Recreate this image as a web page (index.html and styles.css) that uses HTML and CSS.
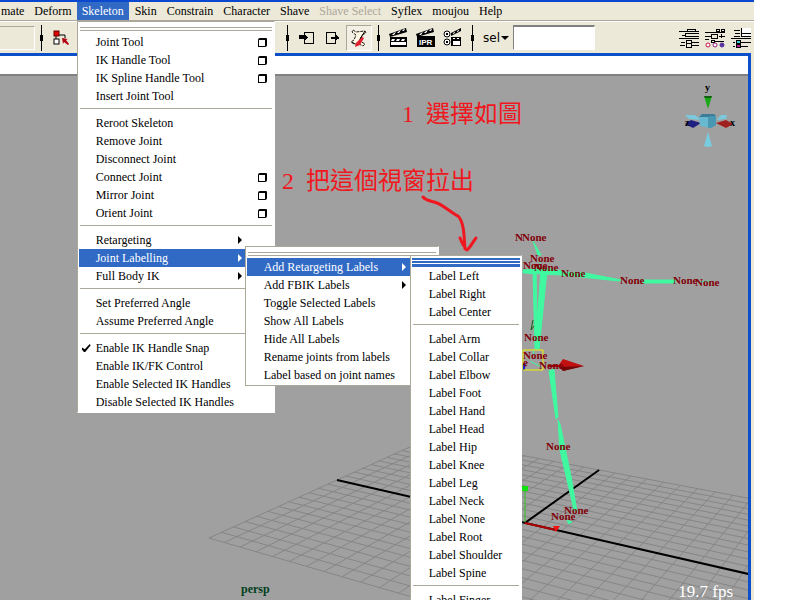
FILE: index.html
```
<!DOCTYPE html>
<html lang="zh-Hant">
<head>
  <meta charset="UTF-8" />
  <title>Skeleton - Joint Labelling</title>
  <link rel="stylesheet" href="styles.css">
</head>
<body>
  <div class="app">
    <nav class="menubar">
      <ul>
        <li><button type="button">mate</button></li>
        <li><button type="button">Deform</button></li>
        <li class="open">
          <button type="button">Skeleton</button>
          <div class="menu menu-skeleton">
            <button type="button" class="tear" aria-label="Tear off"><span></span></button>
            <ul>
              <li><button type="button" class="item"><span>Joint Tool</span><i class="box"></i></button></li>
              <li><button type="button" class="item"><span>IK Handle Tool</span><i class="box"></i></button></li>
              <li><button type="button" class="item"><span>IK Spline Handle Tool</span><i class="box"></i></button></li>
              <li><button type="button" class="item"><span>Insert Joint Tool</span></button></li>
              <li class="line"></li>
              <li><button type="button" class="item"><span>Reroot Skeleton</span></button></li>
              <li><button type="button" class="item"><span>Remove Joint</span></button></li>
              <li><button type="button" class="item"><span>Disconnect Joint</span></button></li>
              <li><button type="button" class="item"><span>Connect Joint</span><i class="box"></i></button></li>
              <li><button type="button" class="item"><span>Mirror Joint</span><i class="box"></i></button></li>
              <li><button type="button" class="item"><span>Orient Joint</span><i class="box"></i></button></li>
              <li class="line"></li>
              <li><button type="button" class="item"><span>Retargeting</span><i class="arrow"></i></button></li>
              <li>
                <button type="button" class="item active"><span>Joint Labelling</span><i class="arrow"></i></button>
                <div class="menu menu-labelling">
                  <button type="button" class="tear" aria-label="Tear off"><span></span></button>
                  <ul>
                    <li>
                      <button type="button" class="item active"><span>Add Retargeting Labels</span><i class="arrow"></i></button>
                      <div class="menu menu-retarget">
                        <button type="button" class="tear tear-active" aria-label="Tear off"><span></span></button>
                        <ul>
                          <li><button type="button" class="item"><span>Label Left</span></button></li>
                          <li><button type="button" class="item"><span>Label Right</span></button></li>
                          <li><button type="button" class="item"><span>Label Center</span></button></li>
                          <li class="line"></li>
                          <li><button type="button" class="item"><span>Label Arm</span></button></li>
                          <li><button type="button" class="item"><span>Label Collar</span></button></li>
                          <li><button type="button" class="item"><span>Label Elbow</span></button></li>
                          <li><button type="button" class="item"><span>Label Foot</span></button></li>
                          <li><button type="button" class="item"><span>Label Hand</span></button></li>
                          <li><button type="button" class="item"><span>Label Head</span></button></li>
                          <li><button type="button" class="item"><span>Label Hip</span></button></li>
                          <li><button type="button" class="item"><span>Label Knee</span></button></li>
                          <li><button type="button" class="item"><span>Label Leg</span></button></li>
                          <li><button type="button" class="item"><span>Label Neck</span></button></li>
                          <li><button type="button" class="item"><span>Label None</span></button></li>
                          <li><button type="button" class="item"><span>Label Root</span></button></li>
                          <li><button type="button" class="item"><span>Label Shoulder</span></button></li>
                          <li><button type="button" class="item"><span>Label Spine</span></button></li>
                          <li class="line"></li>
                          <li><button type="button" class="item"><span>Label Finger</span></button></li>
                        </ul>
                      </div>
                    </li>
                    <li><button type="button" class="item"><span>Add FBIK Labels</span><i class="arrow"></i></button></li>
                    <li><button type="button" class="item"><span>Toggle Selected Labels</span></button></li>
                    <li><button type="button" class="item"><span>Show All Labels</span></button></li>
                    <li><button type="button" class="item"><span>Hide All Labels</span></button></li>
                    <li><button type="button" class="item"><span>Rename joints from labels</span></button></li>
                    <li><button type="button" class="item"><span>Label based on joint names</span></button></li>
                  </ul>
                </div>
              </li>
              <li><button type="button" class="item"><span>Full Body IK</span><i class="arrow"></i></button></li>
              <li class="line"></li>
              <li><button type="button" class="item"><span>Set Preferred Angle</span></button></li>
              <li><button type="button" class="item"><span>Assume Preferred Angle</span></button></li>
              <li class="line"></li>
              <li><label class="item"><input type="checkbox" checked /><span>Enable IK Handle Snap</span></label></li>
              <li><button type="button" class="item"><span>Enable IK/FK Control</span></button></li>
              <li><button type="button" class="item"><span>Enable Selected IK Handles</span></button></li>
              <li><button type="button" class="item"><span>Disable Selected IK Handles</span></button></li>
            </ul>
          </div>
        </li>
        <li><button type="button">Skin</button></li>
        <li><button type="button">Constrain</button></li>
        <li><button type="button">Character</button></li>
        <li><button type="button">Shave</button></li>
        <li><button type="button" disabled>Shave Select</button></li>
        <li><button type="button">Syflex</button></li>
        <li><button type="button">moujou</button></li>
        <li><button type="button">Help</button></li>
      </ul>
    </nav>

    <div class="toolbar">
      <div class="tools-left">
        <input type="text" class="status-field" aria-label="Status" disabled />
        <span class="grip"></span>
        <button type="button" class="tool" aria-label="Select by hierarchy">
          <svg width="16" height="16" viewBox="0 0 16 16">
            <path d="M3 6v4M6 5h6v3" fill="none" stroke="#000" />
            <rect x="1" y="1" width="5" height="5" fill="#e00000" stroke="#600" />
            <rect x="1" y="9" width="5" height="5" fill="#fff" stroke="#000" />
            <path d="M9 8l6 1-2 1 3 4-1 1-4-3-1 2z" fill="#b00010" />
          </svg>
        </button>
      </div>
      <span class="grip"></span>
      <button type="button" class="tool" aria-label="Inputs">
        <svg width="16" height="14" viewBox="0 0 16 14" shape-rendering="crispEdges">
          <path d="M5 4V1h9v11H5V9" fill="none" stroke="#000" />
          <path d="M0 4h5V2l4 5-4 3V8H0z" />
        </svg>
      </button>
      <button type="button" class="tool" aria-label="Outputs">
        <svg width="16" height="14" viewBox="0 0 16 14" shape-rendering="crispEdges">
          <path d="M10 3V1H1v11h9v-2" fill="none" stroke="#000" />
          <path d="M6 6h4V3l5 4-5 3V8H6z" />
        </svg>
      </button>
      <button type="button" class="tool pressed" aria-label="Construction history">
        <svg width="18" height="18" viewBox="0 0 18 18">
          <path d="M3 1l3 2 9-1 1 2-4 2-2 6 5 3-2 2-4-2H4l-3-2 3-2 2-5-4-3z" fill="#fffbe8" stroke="#221a10" stroke-dasharray="3 1" />
          <path d="M15 2l-5 8M12 7l-4 7M2 13l3 2" stroke="#000" fill="none" />
          <path d="M12 8l2 1-4 7-5 2 1-4z" fill="#e0202c" />
        </svg>
      </button>
      <span class="grip"></span>
      <button type="button" class="tool slate" aria-label="Render">
        <svg width="19" height="19" viewBox="0 0 19 19">
          <path d="M0 6L17 0l1 4L1 9z" />
          <path d="M3 7l2-2 2-1-2 3zM8 5l2-2 2-1-2 3zM13 3l2-2 1 0-1 2z" fill="#fff" />
          <path d="M1 9h17v10H1z" />
          <path d="M3 11h3l-1 2H2zM8 11h3l-1 2H7zM13 11h3l-1 2h-3zM2 14h15v3H2z" fill="#fff" />
        </svg>
      </button>
      <button type="button" class="tool slate" aria-label="IPR render">
        <svg width="19" height="19" viewBox="0 0 19 19">
          <path d="M0 6L17 0l1 4L1 9z" />
          <path d="M3 7l2-2 2-1-2 3zM8 5l2-2 2-1-2 3zM13 3l2-2 1 0-1 2z" fill="#fff" />
          <path d="M1 8h18v11H1z" />
          <text x="3" y="17" class="ipr">IPR</text>
        </svg>
      </button>
      <button type="button" class="tool slate" aria-label="Render settings">
        <svg width="19" height="19" viewBox="0 0 19 19">
          <path d="M8 5l10-5v3L8 8zM8 9h10v9H8z" />
          <path d="M10 5l2-1v1l-2 1zM14 3l2-1v1l-2 1zM10 10h2v1h-2zM14 10h2v1h-2zM10 13h7v4h-7z" fill="#fff" />
          <g fill="#fff" stroke="#000"><circle cx="4" cy="6" r="3" /><circle cx="4" cy="14" r="3" /></g>
          <path d="M3 5h2v2H3zM3 13h2v2H3z" />
        </svg>
      </button>
      <span class="grip"></span>
      <button type="button" class="sel">sel<i></i></button>
      <input type="text" class="sel-field" aria-label="Selection" />
      <div class="tools-right">
        <button type="button" class="tool" aria-label="Attribute editor">
          <svg width="20" height="20" viewBox="0 0 20 20" shape-rendering="crispEdges">
            <path d="M0 3h20M8 3V1h8v2M6 5h14v3H6zM0 10h20M2 14h4M1 17h5M7 12h5v7H7zM7 15h5M12 14h8M12 17h8M3 7h3" fill="none" stroke="#000" />
          </svg>
        </button>
        <button type="button" class="tool" aria-label="Tool settings">
          <svg width="20" height="20" viewBox="0 0 20 20" shape-rendering="crispEdges">
            <path d="M0 4h20M11 1h3v2h-3zM16 1h3v2h-3zM6 6h6v4H6zM0 8h6M14 8h6M16 6v4M6 12h3v2H6zM9 13h10M0 11h4" fill="none" stroke="#000" />
            <g shape-rendering="auto" stroke-width="1"><circle cx="3" cy="17" r="2" fill="#fff" stroke="#c01040" /><circle cx="10" cy="17" r="2" fill="#fff" stroke="#902080" /><circle cx="17" cy="17" r="2" fill="#6030a0" stroke="#5030a0" /></g>
          </svg>
        </button>
        <button type="button" class="tool" aria-label="Channel box">
          <svg width="20" height="20" viewBox="0 0 20 20" shape-rendering="crispEdges">
            <path d="M10 0h10v8H10z" fill="#fff" />
            <path d="M3 2h6M4 5h5M3 8h6M10 0v8M10 5h10M10 8h10M0 10h20M2 14h2M2 18h2M10 14h10M10 18h7" fill="none" stroke="#000" />
            <path d="M5 12h4v3H5z" fill="#40d0d0" stroke="#000" />
            <path d="M5 16h4v3H5z" fill="#b02090" stroke="#000" />
          </svg>
        </button>
      </div>
    </div>

    <main class="panel">
      <div class="panel-menu"></div>
      <div class="viewport">
        <svg class="scene" viewBox="0 76 748 524" preserveAspectRatio="xMinYMin slice">
          <path id="grid" class="grid" />
          <path id="axes" class="axes" />
          <path d="M525 523l31 7" stroke="#b00000" stroke-width="2" />
          <path d="M553 526h7l-4 6z" fill="#f01010" />
          <path d="M525 522v-33" stroke="#30c820" />
          <path d="M522 486h6v5h-6z" fill="#10e010" />

          <!-- joint chain -->
          <g class="bones">
            <path d="M533 241l8 14-3 0zM540 262l0 8M523 270l22-2 17 3 0 4-39-2z" />
            <path d="M561 272l24 1 36 7-2 1-58-6zM643 280l32 0v3l-32 0zM700 282l10-1" />
            <path d="M533 271l2 78 4 0 8-78-6 0-4 50-1-50z" />
            <path d="M533 350l1 4M530 361l11 6" />
            <path d="M549 371l7 48 2-2-4-48zM558 420l2 30 14 60 3 2-6-36-11-52z" />
            <path d="M567 520l5 2-3 2z" />
          </g>
          <path d="M533 320l-2 10 3-4" fill="none" stroke="#106010" />
          <path d="M523 350h20v20h-20z" fill="none" stroke="#f0f000" />
          <path d="M523 364l3-1-1 6-2 1z" fill="#2020c0" />
          <path d="M548 366h15" stroke="#b00000" stroke-width="2" />
          <path d="M563 359l21 7-21 5-5-5z" fill="#c01010" />
          <path d="M560 367l24-1-21 5z" fill="#700808" />

          <g class="labels">
            <text x="515" y="241">N</text><text x="522" y="241">None</text>
            <text x="530" y="262">None</text>
            <text x="523" y="269">None</text><text x="534" y="271">None</text>
            <text x="561" y="277">None</text>
            <text x="620" y="284">None</text>
            <text x="673" y="284">None</text><text x="695" y="286">None</text>
            <text x="524" y="341">None</text>
            <text x="523" y="359">None</text><text x="523" y="366">e</text>
            <text x="539" y="369">None</text>
            <text x="546" y="450">None</text>
            <text x="564" y="514">None</text><text x="551" y="520">None</text>
          </g>

          <!-- view compass -->
          <g class="compass">
            <path d="M704 96h8l-4 13z" fill="#18a818" /><path d="M704 96h8l-1 2h-6z" fill="#106010" />
            <path d="M685 115l10 0 6 5-12-1zM727 115l-6 0-5 5 10-1z" fill="#7cc8dc" />
            <path d="M701 123l-10-3-6 4 8 4z" fill="#202080" />
            <path d="M716 123l10-3 7 4-7 4z" fill="#a02020" />
            <path d="M699 117l3-3h12l2 3v8l-5 3-11-2z" fill="#68b8d0" />
            <path d="M708 117l8-1v9l-5 3-3 0z" fill="#4898b4" /><path d="M699 117l3-3h12l2 2-8 1z" fill="#3c7c98" />
            <path d="M708 132l4 14-4 1-4-1z" fill="#78cce0" />
            <text x="705" y="91">y</text><text x="685" y="126">z</text><text x="730" y="126">x</text>
          </g>

          <path class="doodle" d="M423 197c3 4 9 4 14 6 8 3 14 10 21 13 6 6 6 19 7 33M460 238c2 5 4 9 7 12 3-2 5-7 9-12" />
        </svg>
        <p class="note note-first"><span>1</span>選擇如圖</p>
        <p class="note note-second"><span>2</span>把這個視窗拉出</p>
        <span class="camera">persp</span>
        <span class="fps">19.7 fps</span>
      </div>
    </main>
  </div>
  <script src="grid.js"></script>
</body>
</html>
```
FILE: styles.css
```
* {
  box-sizing: border-box;
}

body {
  margin: 0;
  background: #fff;
  font-family: "Liberation Serif", "Noto Sans CJK TC", serif;
  font-size: 12px;
}

button,
input,
label {
  font: inherit;
  color: inherit;
}

button {
  border: none;
  background: none;
  padding: 0;
  white-space: nowrap;
}

ul {
  list-style: none;
  margin: 0;
  padding: 0;
}

.app {
  display: flex;
  flex-direction: column;
  height: 100vh;
  margin-right: 46px;
  border-top: 2px solid #0a48d0;
  background: #ece9d8;
  overflow: hidden;
}

/* menu bar */
.menubar {
  flex: none;
  height: 19px;
  border-bottom: 1px solid #aca899;
}

.menubar > ul {
  display: flex;
  margin-left: -4px;
}

.menubar > ul > li {
  position: relative;
}

.menubar > ul > li > button {
  display: block;
  height: 18px;
  padding: 0 5px;
  line-height: 18px;
}

.menubar > ul > li > button:disabled {
  color: #aca899;
}

.menubar > ul > li.open {
  margin-right: 1px;
}

.menubar > ul > li.open > button {
  background: #316ac5;
  color: #fff;
}

/* drop-down menus */
.menu {
  position: absolute;
  z-index: 2;
  padding: 0 1px 1px;
  background: #fff;
  border: 1px solid #aca899;
  border-right-color: #fff;
}

.menu li {
  position: relative;
}

.menu-skeleton {
  top: 19px;
  left: 0;
  width: 198px;
  border-bottom-color: #fff;
}

.menu-labelling {
  top: -3px;
  left: 166px;
  width: 194px;
}

.menu-retarget {
  top: -3px;
  left: 163px;
  width: 112px;
}

.tear {
  display: block;
  width: 100%;
  height: 11px;
  padding: 5px 1px 2px;
}

.tear span {
  display: block;
  height: 4px;
  border: solid #aca899;
  border-width: 1px 0;
}

.tear-active {
  padding: 2px 0 0;
}

.tear-active span {
  height: 9px;
  border: solid #316ac5;
  border-width: 2px 0;
  background: linear-gradient(#fff 1px, #316ac5 1px, #316ac5 3px, #fff 3px, #fff 4px, #316ac5 4px);
}

.item {
  position: relative;
  display: flex;
  align-items: center;
  width: 100%;
  height: 18px;
  padding-left: 17px;
  text-align: left;
  white-space: nowrap;
}

.item.active {
  background: #316ac5;
  color: #fff;
}

.item input {
  appearance: none;
  width: 9px;
  height: 8px;
  margin: 0 5px 0 -14px;
  background: #000;
  clip-path: polygon(0 40%, 35% 65%, 90% 0, 100% 15%, 40% 100%, 25% 100%, 0 65%);
}

.arrow {
  margin-left: auto;
  margin-right: 31px;
  border: solid transparent;
  border-width: 4px 0 4px 4px;
  border-left-color: currentColor;
}

.box {
  width: 9px;
  height: 9px;
  margin-left: auto;
  margin-right: 6px;
  border: solid #000;
  border-width: 2px 2px 1px 1px;
  border-radius: 2px 1px 2px 0;
}

.line {
  height: 9px;
  padding: 3px 1px 0;
}

.line::before {
  content: "";
  display: block;
  height: 1px;
  background: #aca899;
}

/* status line */
.toolbar {
  flex: none;
  display: flex;
  align-items: center;
  height: 32px;
  border-top: 1px solid #fff;
}

.tools-left {
  display: flex;
  align-items: center;
  width: 281px;
}

.status-field {
  width: 35px;
  height: 24px;
  border: solid #fff;
  border-width: 1px 1px 1px 0;
  border-top-color: #aca899;
  background: #ece9d8;
}

.grip {
  flex: none;
  width: 13px;
  height: 26px;
  background: linear-gradient(#000, #000) center / 1px 100% no-repeat, linear-gradient(#000, #000) center / 3px 6px no-repeat;
}

.tool {
  display: flex;
  flex: none;
  align-items: center;
  justify-content: center;
  width: 26px;
  height: 26px;
}

.tool.slate {
  width: 27px;
}

.tool.pressed {
  border: 1px solid #aca899;
  border-right-color: #fff;
  border-bottom-color: #fff;
  background: #f2efe4;
}

.ipr {
  font: bold 8px "Liberation Sans", sans-serif;
  fill: #fff;
}

.sel {
  display: flex;
  align-items: center;
  gap: 1px;
  width: 34px;
  padding-left: 4px;
  font: 12px "DejaVu Sans", sans-serif;
}

.sel i {
  border: solid transparent;
  border-width: 4px 4px 0;
  border-top-color: #000;
}

.sel-field {
  width: 82px;
  height: 25px;
  border: 1px solid #fff;
  border-top: 2px solid #808080;
  border-left-color: #808080;
  background: #fff;
}

.tools-right {
  display: flex;
  margin-left: auto;
}

/* 3D panel */
.panel {
  flex: 1;
  display: flex;
  flex-direction: column;
  min-height: 0;
  margin-right: 3px;
  border: solid #0b50c8;
  border-width: 3px 3px 0 0;
}

.panel-menu {
  flex: none;
  height: 20px;
  background: #fff;
  border-bottom: 2px solid #808080;
}

.viewport {
  position: relative;
  flex: 1;
  overflow: hidden;
  background: #a0a0a0;
}

.scene {
  display: block;
  width: 100%;
  height: 100%;
}

.grid {
  fill: none;
  stroke: #868686;
}

.axes {
  fill: none;
  stroke: #000;
  stroke-width: 2;
}

.bones path {
  fill: #40f8a0;
  stroke: #40f8a0;
}

.labels text {
  font: bold 11px "Liberation Serif", serif;
  fill: #800008;
}

.compass text {
  font: bold 10px "Liberation Serif", serif;
}

.doodle {
  fill: none;
  stroke: #f01820;
  stroke-width: 3;
  stroke-linecap: round;
  stroke-linejoin: round;
}

.note {
  position: absolute;
  display: flex;
  gap: 12px;
  margin: 0;
  color: #f01820;
  font-size: 24px;
  line-height: 28px;
  white-space: nowrap;
}

.note-first {
  top: 24px;
  left: 402px;
}

.note-second {
  top: 91px;
  left: 282px;
}

.camera,
.fps {
  position: absolute;
  bottom: 0;
}

.camera {
  left: 241px;
  bottom: 3px;
  font-weight: bold;
  color: #004020;
}

.fps {
  right: 15px;
  font-size: 17px;
  line-height: 16px;
  color: #fff;
}
```
FILE: grid.js
```
// ground plane, 12 cells each side of the origin
const cells = 24;

// plane coordinates (0..2, 0..2) to screen
function project(s, t) {
  const w = 1 + 0.189 * s - 0.13 * t;
  const x = (209 + 191.7 * s + 155.25 * t) / w;
  const y = (538 + 32.7 * s - 16.9 * t) / w;
  return x.toFixed(1) + " " + y.toFixed(1);
}

let grid = "";
for (let i = 0; i <= cells; i++) {
  const k = (i * 2) / cells;
  grid += "M" + project(k, 0) + "L" + project(k, 2);
  grid += "M" + project(0, k) + "L" + project(2, k);
}

document.getElementById("grid").setAttribute("d", grid);
document.getElementById("axes").setAttribute("d",
  "M" + project(1, 0) + "L" + project(1, 2) + "M" + project(1, 1) + "L" + project(2, 1));
```
